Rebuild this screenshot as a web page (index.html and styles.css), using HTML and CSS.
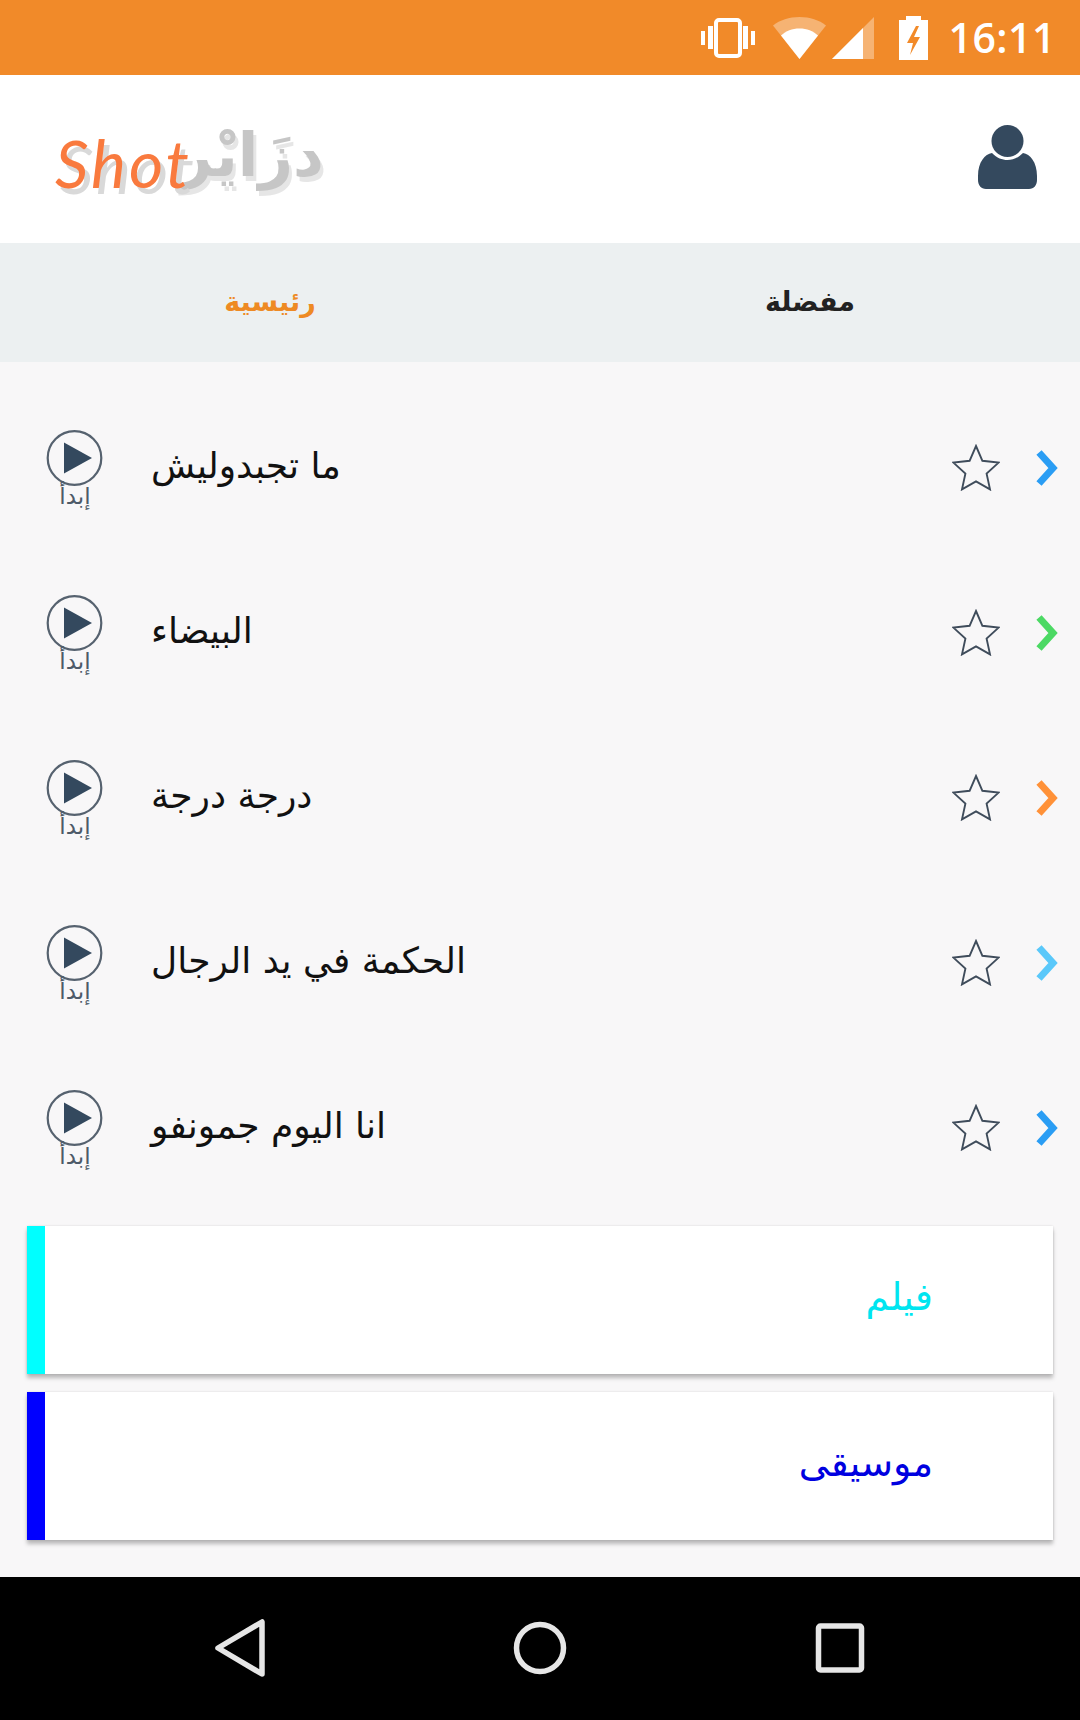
FILE: index.html
```html
<!DOCTYPE html>
<html lang="ar">
<head>
    <meta charset="UTF-8">
    <meta name="viewport" content="width=device-width, initial-scale=1.0">
    <title>Shot</title>
    <link rel="stylesheet" href="styles.css">
</head>
<body>
    <svg class="defs" width="0" height="0">
        <symbol id="play" viewBox="0 0 58 58">
            <circle cx="28.500" cy="29" r="26.800" fill="none" stroke="#56626f" stroke-width="2.200"/>
            <path d="M18 13.500 46 29 18 44.500z" fill="#34495e"/>
        </symbol>
        <symbol id="star" viewBox="0 0 48 47">
            <path d="M24 2 30.400 16.800 46.600 18.600 34.600 29.600 38 45.400 24 37.400 10 45.400 13.400 29.600 1.400 18.600 17.600 16.800z" fill="none" stroke="#3f4c5b" stroke-width="1.900" stroke-linejoin="miter"/>
        </symbol>
        <symbol id="chevron" viewBox="0 0 22 36">
            <path d="M3 2.500 17 18 3 33.500" fill="none" stroke="currentColor" stroke-width="7"/>
        </symbol>
    </svg>

    <div class="app">
        <div class="status-bar">
            <svg class="status-icon" width="54" height="40" viewBox="0 0 54 40">
                <rect x="15" y="2" width="24" height="36" rx="3" fill="none" stroke="#fff" stroke-width="4"/>
                <path d="M0 13h4v14H0zM7 8h5v23H7zM42 8h5v23h-5zM50 13h4v14h-4z" fill="#fff"/>
            </svg>
            <svg class="status-icon" width="53" height="42" viewBox="0 0 53 42">
                <path d="M0 8.500C7 3 16 0 26.500 0S46 3 53 8.500L26.500 42z" fill="#fff" fill-opacity=".35"/>
                <path d="M8 18.500C13 14 19 11.500 26.500 11.500S40 14 45 18.500L26.500 42z" fill="#fff"/>
            </svg>
            <svg class="status-icon" width="42" height="42" viewBox="0 0 42 42">
                <path d="M0 42 42 0V42z" fill="#fff" fill-opacity=".35"/>
                <path d="M0 42 31 11V42z" fill="#fff"/>
            </svg>
            <svg class="status-icon" width="29" height="44" viewBox="0 0 29 44">
                <path d="M7 0h15v4h7v40H0V4h7z" fill="#fff"/>
                <path d="M17 10 8 27h6l-3 12 10-18h-6l5-11z" fill="#f28a28"/>
            </svg>
            <span class="clock">16:11</span>
        </div>

        <header class="top-bar">
            <div class="logo">
                <span class="logo-latin">Shot</span>
                <span class="logo-arabic">دزَايْر</span>
            </div>
            <svg class="profile-icon" width="59" height="64" viewBox="0 0 59 64">
                <circle cx="29.500" cy="16" r="16" fill="#34495e"/>
                <path d="M14 28C19 33 24 35 29.500 35S40 33 45 28C52 29 59 37 59 51V55C59 60 56 64 51 64H8C3 64 0 60 0 55V51C0 37 7 29 14 28z" fill="#34495e"/>
            </svg>
        </header>

        <nav class="tabs">
            <div class="tab tab-active">رئيسية</div>
            <div class="tab">مفضلة</div>
        </nav>

        <main class="content">
            <ul class="song-list">
                <li class="song">
                    <div class="play-btn">
                        <svg class="play-icon"><use href="#play"/></svg>
                        <span class="play-label">إبدأ</span>
                    </div>
                    <span class="song-title">ما تجبدوليش</span>
                    <svg class="star-icon"><use href="#star"/></svg>
                    <svg class="chevron-icon chevron-blue"><use href="#chevron"/></svg>
                </li>
                <li class="song">
                    <div class="play-btn">
                        <svg class="play-icon"><use href="#play"/></svg>
                        <span class="play-label">إبدأ</span>
                    </div>
                    <span class="song-title">البيضاء</span>
                    <svg class="star-icon"><use href="#star"/></svg>
                    <svg class="chevron-icon chevron-green"><use href="#chevron"/></svg>
                </li>
                <li class="song">
                    <div class="play-btn">
                        <svg class="play-icon"><use href="#play"/></svg>
                        <span class="play-label">إبدأ</span>
                    </div>
                    <span class="song-title">درجة درجة</span>
                    <svg class="star-icon"><use href="#star"/></svg>
                    <svg class="chevron-icon chevron-orange"><use href="#chevron"/></svg>
                </li>
                <li class="song">
                    <div class="play-btn">
                        <svg class="play-icon"><use href="#play"/></svg>
                        <span class="play-label">إبدأ</span>
                    </div>
                    <span class="song-title">الحكمة في يد الرجال</span>
                    <svg class="star-icon"><use href="#star"/></svg>
                    <svg class="chevron-icon chevron-sky"><use href="#chevron"/></svg>
                </li>
                <li class="song">
                    <div class="play-btn">
                        <svg class="play-icon"><use href="#play"/></svg>
                        <span class="play-label">إبدأ</span>
                    </div>
                    <span class="song-title">انا اليوم جمونفو</span>
                    <svg class="star-icon"><use href="#star"/></svg>
                    <svg class="chevron-icon chevron-blue"><use href="#chevron"/></svg>
                </li>
            </ul>

            <div class="category category-film">فيلم</div>
            <div class="category category-music">موسيقى</div>
        </main>

        <div class="nav-bar">
            <svg class="nav-icon" width="60" height="60" viewBox="0 0 60 60">
                <path d="M52 4V56L8 30z" fill="none" stroke="#e6e6e6" stroke-width="5.500" stroke-linejoin="round"/>
            </svg>
            <svg class="nav-icon" width="60" height="60" viewBox="0 0 60 60">
                <circle cx="30" cy="30" r="23.500" fill="none" stroke="#e6e6e6" stroke-width="5.500"/>
            </svg>
            <svg class="nav-icon" width="60" height="60" viewBox="0 0 60 60">
                <rect x="8.500" y="8" width="43" height="44" rx="2" fill="none" stroke="#e6e6e6" stroke-width="5.500"/>
            </svg>
        </div>
    </div>
</body>
</html>
```

FILE: styles.css
```css
body {
    margin: 0;
    font-family: "DejaVu Sans", "Noto Sans", sans-serif;
    background-color: #f8f7f8;
}
.defs {
    display: block;
    height: 0;
}
.app {
    display: flex;
    flex-direction: column;
    width: 1080px;
    height: 1720px;
    overflow: hidden;
}

/* status bar */
.status-bar {
    display: flex;
    align-items: center;
    justify-content: flex-end;
    flex: none;
    height: 75px;
    padding-right: 24px;
    background-color: #f18a29;
    color: white;
}
.status-icon {
    flex: none;
    margin-left: 6px;
}
.status-icon:first-child {
    margin-right: 12px;
}
.status-icon:nth-child(4) {
    margin-left: 25px;
}
.clock {
    margin-left: 20px;
    font-family: "Open Sans", sans-serif;
    font-size: 41px;
    font-weight: 600;
    letter-spacing: 0.5px;
    line-height: 75px;
}

/* header */
.top-bar {
    display: flex;
    align-items: center;
    justify-content: space-between;
    flex: none;
    height: 168px;
    padding: 0 43px 4px 55px;
    box-sizing: border-box;
    background: white;
}
.logo {
    display: flex;
    align-items: center;
    margin-top: 10px;
}
.logo-latin {
    position: relative;
    z-index: 1;
    font-family: "Lato", sans-serif;
    font-size: 66px;
    font-style: italic;
    font-weight: 400;
    color: #f97a3e;
    letter-spacing: 3px;
    text-shadow: 5px 6px 0 #d9d9d9;
}
.logo-arabic {
    margin: -14px 0 0 -14px;
    font-size: 60px;
    font-weight: bold;
    color: #c6c6c6;
    letter-spacing: 3px;
    text-shadow: 3px 5px 0 #e6e6e6;
}
.profile-icon {
    flex: none;
}

/* tabs */
.tabs {
    display: flex;
    flex: none;
    height: 119px;
    background-color: #ecf0f1;
}
.tab {
    flex: 1;
    text-align: center;
    line-height: 117px;
    font-size: 27px;
    font-weight: bold;
    color: #222;
}
.tab-active {
    color: #ee8a24;
}

/* list */
.content {
    flex: 1;
    background-color: #f8f7f8;
}
.song-list {
    list-style: none;
    margin: 0;
    padding: 23px 0 0;
}
.song {
    display: flex;
    align-items: center;
    height: 165px;
    padding: 0 22px 0 46px;
}
.play-btn {
    display: flex;
    flex-direction: column;
    align-items: center;
    width: 58px;
    margin-top: 2px;
}
.play-icon {
    width: 58px;
    height: 58px;
}
.play-label {
    margin-top: -4px;
    font-size: 23px;
    line-height: 26px;
    color: #4d5a68;
}
.song-title {
    flex: 1;
    margin: 0 0 5px 47px;
    font-size: 36px;
    color: #111;
}
.star-icon {
    flex: none;
    width: 48px;
    height: 47px;
}
.chevron-icon {
    flex: none;
    width: 22px;
    height: 36px;
    margin-left: 36px;
}
.chevron-blue { color: #2a9df4; }
.chevron-green { color: #4cd964; }
.chevron-orange { color: #ff9138; }
.chevron-sky { color: #5ac8fa; }

/* category cards */
.category {
    height: 148px;
    margin: 16px 27px 0;
    padding-right: 120px;
    background: white;
    text-align: right;
    line-height: 142px;
    font-size: 38px;
    box-shadow: 0 4px 4px rgba(0,0,0,0.25), 0 0 2px rgba(0,0,0,0.12);
}
.category + .category {
    margin-top: 18px;
}
.category-film {
    border-left: 18px solid #00ffff;
    color: #00e5f0;
}
.category-music {
    border-left: 18px solid #0000ff;
    color: #0000e0;
}

/* bottom nav */
.nav-bar {
    display: flex;
    align-items: center;
    justify-content: center;
    gap: 240px;
    flex: none;
    height: 143px;
    padding-bottom: 2px;
    box-sizing: border-box;
    background: black;
}
```
